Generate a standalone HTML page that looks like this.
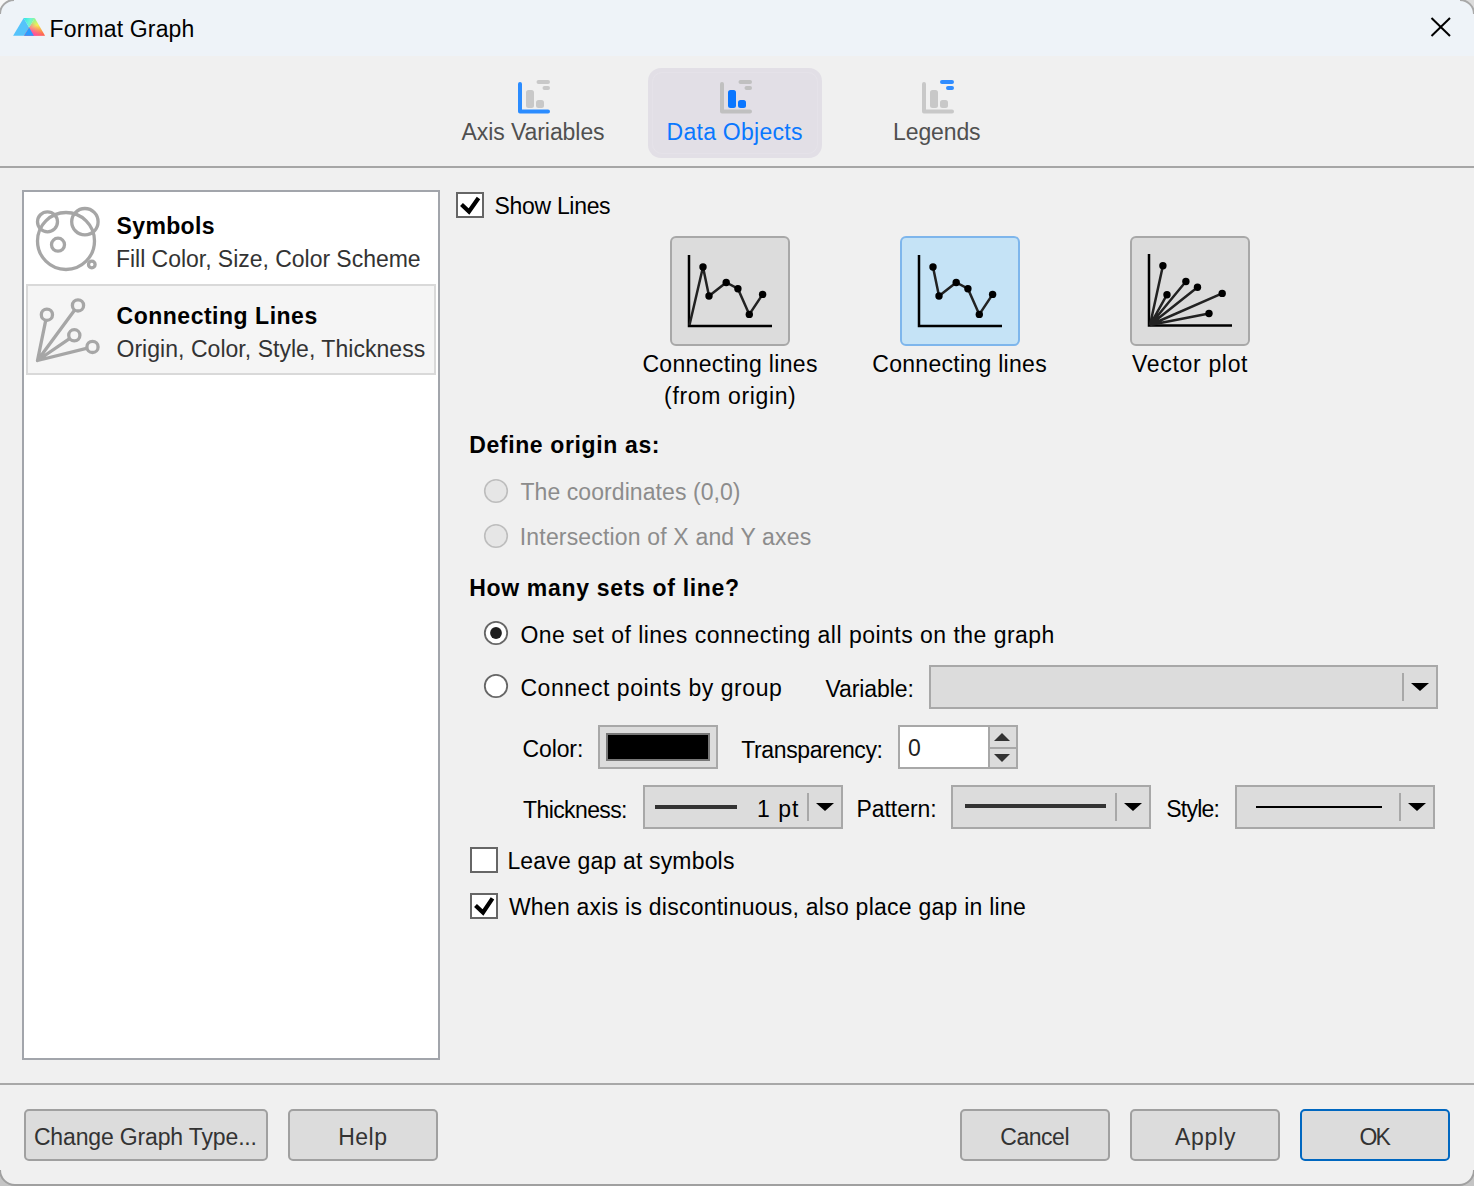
<!DOCTYPE html>
<html><head><meta charset="utf-8">
<style>
html,body{margin:0;padding:0}
body{width:1474px;height:1186px;overflow:hidden;position:relative;background:#f0f0f0;font-family:"Liberation Sans",sans-serif}
.win{position:absolute;left:-2px;top:-2px;width:1474px;height:1186px;border:2px solid #a0a0a0;border-radius:16px;background:#f0f0f0;overflow:hidden}
.abs{position:absolute;box-sizing:border-box}
.t{position:absolute;white-space:nowrap;font-family:"Liberation Sans",sans-serif}
.dd{position:absolute;box-sizing:border-box;background:#dcdcdc;border:2px solid #a8a8a8}
.sep{position:absolute;width:2px;background:#a8a8a8}
.tri{position:absolute;width:0;height:0;border-left:9px solid transparent;border-right:9px solid transparent;border-top:8px solid #000}
.btn{position:absolute;box-sizing:border-box;background:#dcdcdc;border:2px solid #a0a0a0;border-radius:5px}
.cb{position:absolute;box-sizing:border-box;width:28px;height:26px;border:2px solid #666;background:#fff}
.cbtn{position:absolute;box-sizing:border-box;width:120px;height:110px;border:2px solid #a8a8a8;border-radius:6px;background:#dcdcdc}
</style></head><body>
<!-- title bar -->
<div class="abs" style="left:0;top:0;width:1474px;height:56px;background:#eef3f8"></div>
<svg class="abs" style="left:0;top:0" width="1474" height="1186" viewBox="0 0 1474 1186">
  <!-- window corners -->
  <path d="M0 0 H14 A14 14 0 0 0 0 14 Z" fill="#f7f7f7"/>
  <path d="M0 14 A14 14 0 0 1 14 0" fill="none" stroke="#a8a8a8" stroke-width="2"/>
  <path d="M1474 0 H1460 A14 14 0 0 1 1474 14 Z" fill="#dcdcdc"/>
  <path d="M1460 0 A14 14 0 0 1 1474 14" fill="none" stroke="#a8a8a8" stroke-width="2"/>
  <path d="M0 1170 A15 15 0 0 0 15 1185 V1186 H0 Z" fill="#c4c4c4"/>
  <path d="M0 1170 A15 15 0 0 0 15 1185" fill="none" stroke="#a0a0a0" stroke-width="2"/>
  <path d="M1474 1170 A15 15 0 0 1 1459 1185 V1186 H1474 Z" fill="#c4c4c4"/>
  <path d="M1474 1170 A15 15 0 0 1 1459 1185" fill="none" stroke="#a0a0a0" stroke-width="2"/>
  <rect x="15" y="1184" width="1444" height="2" fill="#a0a0a0"/>
  <!-- logo -->
  <defs>
    <linearGradient id="rb1" gradientUnits="userSpaceOnUse" x1="34" y1="18" x2="42" y2="36"><stop offset="0" stop-color="#7ff59a"/><stop offset="0.4" stop-color="#f5f055"/><stop offset="1" stop-color="#ff6a28"/></linearGradient>
    <linearGradient id="rb2" gradientUnits="userSpaceOnUse" x1="31" y1="34" x2="38" y2="26"><stop offset="0" stop-color="#ff3fb4" stop-opacity="1"/><stop offset="1" stop-color="#ff3fb4" stop-opacity="0"/></linearGradient>
    <linearGradient id="cy" gradientUnits="userSpaceOnUse" x1="24" y1="18" x2="34" y2="22"><stop offset="0" stop-color="#2ee8e4"/><stop offset="0.6" stop-color="#70f4d8"/><stop offset="1" stop-color="#8ef58c"/></linearGradient>
  </defs>
  <polygon points="13.1,35.7 23.7,17.9 33.9,35.7" fill="#55c3fb"/>
  <polygon points="24.1,35.7 34.8,17.9 45,35.7" fill="url(#rb1)"/>
  <polygon points="24.1,35.7 34.8,17.9 45,35.7" fill="url(#rb2)"/>
  <polygon points="23.7,17.9 34.8,17.9 29.1,27.4" fill="url(#cy)"/>
  <polygon points="24.1,35.7 29.1,27.4 33.9,35.7" fill="#2a9cff"/>
  <!-- close X -->
  <line x1="1431.5" y1="18" x2="1450" y2="36" stroke="#000" stroke-width="2"/>
  <line x1="1450" y1="18" x2="1431.5" y2="36" stroke="#000" stroke-width="2"/>
</svg>
<!-- tabs -->
<div class="abs" style="left:648px;top:68px;width:174px;height:90px;border-radius:13px;background:#e2dfe6"></div>
<div class="abs" style="left:652px;top:72px;width:166px;height:82px;border-radius:10px;border:1px solid rgba(255,255,255,0.12)"></div>
<svg class="abs" style="left:0;top:0" width="1474" height="180" viewBox="0 0 1474 180">
  <g stroke-linecap="round" fill="none">
    <!-- axis variables -->
    <path d="M520 84 V111.5 H548" stroke="#2b8cff" stroke-width="4" stroke-linejoin="round"/>
    <rect x="526" y="90" width="8" height="18" rx="2.5" fill="#c8c8c8"/>
    <rect x="536" y="100" width="8" height="8" rx="2.5" fill="#c8c8c8"/>
    <path d="M538.5 82 H548 M544.5 88 H548" stroke="#c8c8c8" stroke-width="4"/>
    <!-- data objects -->
    <path d="M722 84 V111.5 H750" stroke="#c0c0c0" stroke-width="4" stroke-linejoin="round"/>
    <rect x="728" y="90" width="8" height="18" rx="2.5" fill="#0a76ff"/>
    <rect x="738" y="100" width="8" height="8" rx="2.5" fill="#0a76ff"/>
    <path d="M740.5 82 H750 M746.5 88 H750" stroke="#c0c0c0" stroke-width="4"/>
    <!-- legends -->
    <path d="M924 84 V111.5 H952" stroke="#c8c8c8" stroke-width="4" stroke-linejoin="round"/>
    <rect x="930" y="90" width="8" height="18" rx="2.5" fill="#c8c8c8"/>
    <rect x="940" y="100" width="8" height="8" rx="2.5" fill="#c8c8c8"/>
    <path d="M942 82 H952 M948 88 H952" stroke="#2f8cff" stroke-width="4"/>
  </g>
</svg>
<div class="abs" style="left:0;top:166px;width:1474px;height:2px;background:#a6a6a6"></div>

<!-- left panel -->
<div class="abs" style="left:22px;top:190px;width:418px;height:870px;border:2px solid #a2a5ab;background:#fff"></div>
<div class="abs" style="left:26px;top:284px;width:410px;height:91px;border:2px solid #d9d9d9;background:#f5f5f5"></div>
<svg class="abs" style="left:0;top:180px" width="120" height="200" viewBox="0 180 120 200">
  <g fill="none" stroke="#a6a6a6" stroke-width="3.3">
    <circle cx="66" cy="241" r="28.5"/>
    <circle cx="47.5" cy="221.8" r="10"/>
    <circle cx="84.9" cy="221.7" r="13.2"/>
    <circle cx="58" cy="244.7" r="6.5"/>
    <circle cx="91.8" cy="264.5" r="3.3" fill="#fff"/>
  </g>
  <g stroke="#a6a6a6" stroke-width="3.3" fill="#f5f5f5">
    <path d="M37.5 360.5 L46.9 314.7 M37.5 360.5 L78 305.4 M37.5 360.5 L74.3 335.3 M37.5 360.5 L92.5 346.9" stroke-linecap="round"/>
    <path d="M36 362 L40 354 L44 359 Z" fill="#a6a6a6" stroke="none"/>
    <circle cx="46.9" cy="314.7" r="5.6"/>
    <circle cx="78" cy="305.4" r="5.6"/>
    <circle cx="74.3" cy="335.3" r="5.6"/>
    <circle cx="92.5" cy="346.9" r="5.6"/>
  </g>
</svg>

<!-- show lines checkbox -->
<div class="cb" style="left:456px;top:192px"></div>
<svg class="abs" style="left:0;top:0" width="1474" height="1186" viewBox="0 0 1474 1186">
  <path d="M461.5 204.5 L469 211.5 L478.5 198" fill="none" stroke="#000" stroke-width="4.2" stroke-linejoin="miter" stroke-linecap="butt"/>
  <path d="M475.5 905.5 L483 912.5 L492.5 898.3" fill="none" stroke="#000" stroke-width="4.2" stroke-linejoin="miter" stroke-linecap="butt"/>
</svg>

<!-- chart type buttons -->
<div class="cbtn" style="left:670px;top:236px"></div>
<div class="cbtn" style="left:900px;top:236px;background:#c5e3f6;border-color:#7eb6ec"></div>
<div class="cbtn" style="left:1130px;top:236px"></div>
<svg class="abs" style="left:0;top:0" width="1474" height="400" viewBox="0 0 1474 400">
  <g>
    <path d="M689 255 V326 H772" fill="none" stroke="#000" stroke-width="2.5"/>
    <polyline points="689.5,325 703,267 709,296 726.2,282.5 737.9,288.7 749.3,314.4 762.6,294.4" fill="none" stroke="#222" stroke-width="2.5"/>
    <g fill="#000"><circle cx="703" cy="267" r="3.7"/><circle cx="709" cy="296" r="3.7"/><circle cx="726.2" cy="282.5" r="3.7"/><circle cx="737.9" cy="288.7" r="3.7"/><circle cx="749.3" cy="314.4" r="3.7"/><circle cx="762.6" cy="294.4" r="3.7"/></g>
  </g>
  <g transform="translate(230,0)">
    <path d="M689 255 V326 H772" fill="none" stroke="#000" stroke-width="2.5"/>
    <polyline points="703,267 709,296 726.2,282.5 737.9,288.7 749.3,314.4 762.6,294.4" fill="none" stroke="#222" stroke-width="2.5"/>
    <g fill="#000"><circle cx="703" cy="267" r="3.7"/><circle cx="709" cy="296" r="3.7"/><circle cx="726.2" cy="282.5" r="3.7"/><circle cx="737.9" cy="288.7" r="3.7"/><circle cx="749.3" cy="314.4" r="3.7"/><circle cx="762.6" cy="294.4" r="3.7"/></g>
  </g>
  <g>
    <path d="M1149 254 V325.5 H1232" fill="none" stroke="#000" stroke-width="2.5"/>
    <g stroke="#222" stroke-width="2.5" fill="none">
      <path d="M1150 325 L1162.9 265.7 M1150 325 L1167 294.7 M1150 325 L1185.9 281.5 M1150 325 L1197.5 287.3 M1150 325 L1222.2 293.4 M1150 325 L1209 313.5"/>
    </g>
    <g fill="#000"><circle cx="1162.9" cy="265.7" r="3.7"/><circle cx="1167" cy="294.7" r="3.7"/><circle cx="1185.9" cy="281.5" r="3.7"/><circle cx="1197.5" cy="287.3" r="3.7"/><circle cx="1222.2" cy="293.4" r="3.7"/><circle cx="1209" cy="313.5" r="3.7"/></g>
  </g>
</svg>

<!-- radios -->
<svg class="abs" style="left:0;top:0" width="1474" height="1186" viewBox="0 0 1474 1186">
  <circle cx="496" cy="491" r="11.3" fill="#e6e6e6" stroke="#bdbdbd" stroke-width="1.6"/>
  <circle cx="496" cy="536" r="11.3" fill="#e6e6e6" stroke="#bdbdbd" stroke-width="1.6"/>
  <circle cx="496" cy="633" r="11.2" fill="#fff" stroke="#666" stroke-width="1.8"/>
  <circle cx="496" cy="633" r="5.9" fill="#1e1e1e"/>
  <circle cx="496" cy="686" r="11.2" fill="#fff" stroke="#666" stroke-width="1.8"/>
</svg>

<!-- variable dropdown -->
<div class="dd" style="left:929px;top:665px;width:509px;height:44px"></div>
<div class="sep" style="left:1402px;top:673px;height:28px"></div>
<div class="tri" style="left:1411px;top:683px"></div>

<!-- color -->
<div class="dd" style="left:598px;top:725px;width:120px;height:44px"></div>
<div class="abs" style="left:606px;top:733px;width:104px;height:28px;border:2px solid #777;background:#000"></div>

<!-- spin -->
<div class="abs" style="left:898px;top:725px;width:120px;height:44px;border:2px solid #a8a8a8;background:#fff"></div>
<div class="abs" style="left:988px;top:727px;width:28px;height:40px;background:#a8a8a8"></div>
<div class="abs" style="left:990px;top:727px;width:26px;height:20px;background:#dcdcdc"></div>
<div class="abs" style="left:990px;top:749px;width:26px;height:18px;background:#dcdcdc"></div>
<div class="tri" style="left:994px;top:733px;border-top:0;border-bottom:8px solid #333;border-left-width:8px;border-right-width:8px"></div>
<div class="tri" style="left:994px;top:754px;border-top-color:#333;border-left-width:8px;border-right-width:8px"></div>

<!-- thickness -->
<div class="dd" style="left:643px;top:785px;width:200px;height:44px"></div>
<div class="abs" style="left:655px;top:805px;width:82px;height:4px;background:#333"></div>
<div class="sep" style="left:807px;top:793px;height:28px"></div>
<div class="tri" style="left:816px;top:803px"></div>
<!-- pattern -->
<div class="dd" style="left:951px;top:785px;width:200px;height:44px"></div>
<div class="abs" style="left:964.5px;top:804px;width:141px;height:4px;background:#333"></div>
<div class="sep" style="left:1115px;top:793px;height:28px"></div>
<div class="tri" style="left:1124px;top:803px"></div>
<!-- style -->
<div class="dd" style="left:1235px;top:785px;width:200px;height:44px"></div>
<div class="abs" style="left:1256px;top:806px;width:126px;height:2px;background:#000"></div>
<div class="sep" style="left:1399px;top:793px;height:28px"></div>
<div class="tri" style="left:1408px;top:803px"></div>

<!-- checkboxes -->
<div class="cb" style="left:470px;top:847px"></div>
<div class="cb" style="left:470px;top:893px"></div>
<svg class="abs" style="left:0;top:0" width="1474" height="1186" viewBox="0 0 1474 1186">
  <path d="M475.5 905.5 L483 912.5 L492.5 898.3" fill="none" stroke="#000" stroke-width="4.2"/>
</svg>

<!-- footer -->
<div class="abs" style="left:0;top:1083px;width:1474px;height:2px;background:#a8a8a8"></div>
<div class="btn" style="left:24px;top:1109px;width:244px;height:52px"></div>
<div class="btn" style="left:288px;top:1109px;width:150px;height:52px"></div>
<div class="btn" style="left:960px;top:1109px;width:150px;height:52px"></div>
<div class="btn" style="left:1130px;top:1109px;width:150px;height:52px"></div>
<div class="btn" style="left:1300px;top:1109px;width:150px;height:52px;border-color:#0067c0"></div>

<div class="t" style="left:49.60px;top:18.17px;font-size:23px;line-height:23px;letter-spacing:0.141px;color:#000;">Format Graph</div>
<div class="t" style="left:461.50px;top:121.17px;font-size:23px;line-height:23px;letter-spacing:-0.071px;color:#505050;">Axis Variables</div>
<div class="t" style="left:666.60px;top:121.37px;font-size:23px;line-height:23px;letter-spacing:0.260px;color:#0a78ff;">Data Objects</div>
<div class="t" style="left:893.10px;top:121.37px;font-size:23px;line-height:23px;letter-spacing:-0.125px;color:#505050;">Legends</div>
<div class="t" style="left:116.50px;top:215.01px;font-size:23px;line-height:23px;letter-spacing:0.373px;color:#000;font-weight:bold;">Symbols</div>
<div class="t" style="left:116.00px;top:247.57px;font-size:23px;line-height:23px;letter-spacing:-0.031px;color:#333;">Fill Color, Size, Color Scheme</div>
<div class="t" style="left:116.50px;top:304.81px;font-size:23px;line-height:23px;letter-spacing:0.517px;color:#000;font-weight:bold;">Connecting Lines</div>
<div class="t" style="left:116.50px;top:338.27px;font-size:23px;line-height:23px;letter-spacing:0.035px;color:#333;">Origin, Color, Style, Thickness</div>
<div class="t" style="left:494.60px;top:195.27px;font-size:23px;line-height:23px;letter-spacing:-0.323px;color:#000;">Show Lines</div>
<div class="t" style="left:642.40px;top:353.47px;font-size:23px;line-height:23px;letter-spacing:0.336px;color:#000;">Connecting lines</div>
<div class="t" style="left:664.10px;top:384.97px;font-size:23px;line-height:23px;letter-spacing:0.644px;color:#000;">(from origin)</div>
<div class="t" style="left:872.30px;top:353.47px;font-size:23px;line-height:23px;letter-spacing:0.289px;color:#000;">Connecting lines</div>
<div class="t" style="left:1132.00px;top:353.47px;font-size:23px;line-height:23px;letter-spacing:0.683px;color:#000;">Vector plot</div>
<div class="t" style="left:469.20px;top:434.41px;font-size:23px;line-height:23px;letter-spacing:0.631px;color:#000;font-weight:bold;">Define origin as:</div>
<div class="t" style="left:520.50px;top:480.67px;font-size:23px;line-height:23px;letter-spacing:0.069px;color:#8c8c8c;">The coordinates (0,0)</div>
<div class="t" style="left:519.80px;top:526.47px;font-size:23px;line-height:23px;letter-spacing:0.169px;color:#8c8c8c;">Intersection of X and Y axes</div>
<div class="t" style="left:469.20px;top:577.01px;font-size:23px;line-height:23px;letter-spacing:0.681px;color:#000;font-weight:bold;">How many sets of line?</div>
<div class="t" style="left:520.40px;top:624.07px;font-size:23px;line-height:23px;letter-spacing:0.477px;color:#000;">One set of lines connecting all points on the graph</div>
<div class="t" style="left:520.40px;top:677.17px;font-size:23px;line-height:23px;letter-spacing:0.549px;color:#000;">Connect points by group</div>
<div class="t" style="left:825.60px;top:678.17px;font-size:23px;line-height:23px;letter-spacing:-0.110px;color:#000;">Variable:</div>
<div class="t" style="left:522.50px;top:738.17px;font-size:23px;line-height:23px;letter-spacing:-0.113px;color:#000;">Color:</div>
<div class="t" style="left:741.20px;top:738.67px;font-size:23px;line-height:23px;letter-spacing:-0.364px;color:#000;">Transparency:</div>
<div class="t" style="left:908.00px;top:737.27px;font-size:23px;line-height:23px;letter-spacing:0.000px;color:#222;">0</div>
<div class="t" style="left:523.00px;top:798.67px;font-size:23px;line-height:23px;letter-spacing:-0.602px;color:#000;">Thickness:</div>
<div class="t" style="left:756.90px;top:798.37px;font-size:23px;line-height:23px;letter-spacing:1.079px;color:#000;">1 pt</div>
<div class="t" style="left:856.50px;top:798.17px;font-size:23px;line-height:23px;letter-spacing:-0.064px;color:#000;">Pattern:</div>
<div class="t" style="left:1166.30px;top:798.17px;font-size:23px;line-height:23px;letter-spacing:-0.765px;color:#000;">Style:</div>
<div class="t" style="left:507.40px;top:849.97px;font-size:23px;line-height:23px;letter-spacing:0.171px;color:#000;">Leave gap at symbols</div>
<div class="t" style="left:508.90px;top:895.77px;font-size:23px;line-height:23px;letter-spacing:0.241px;color:#000;">When axis is discontinuous, also place gap in line</div>
<div class="t" style="left:33.90px;top:1125.77px;font-size:23px;line-height:23px;letter-spacing:-0.146px;color:#333;">Change Graph Type...</div>
<div class="t" style="left:338.30px;top:1126.37px;font-size:23px;line-height:23px;letter-spacing:0.463px;color:#333;">Help</div>
<div class="t" style="left:1000.30px;top:1126.37px;font-size:23px;line-height:23px;letter-spacing:-0.480px;color:#333;">Cancel</div>
<div class="t" style="left:1174.90px;top:1126.37px;font-size:23px;line-height:23px;letter-spacing:0.794px;color:#333;">Apply</div>
<div class="t" style="left:1359.60px;top:1125.97px;font-size:23px;line-height:23px;letter-spacing:-2.035px;color:#333;">OK</div>

</body></html>
